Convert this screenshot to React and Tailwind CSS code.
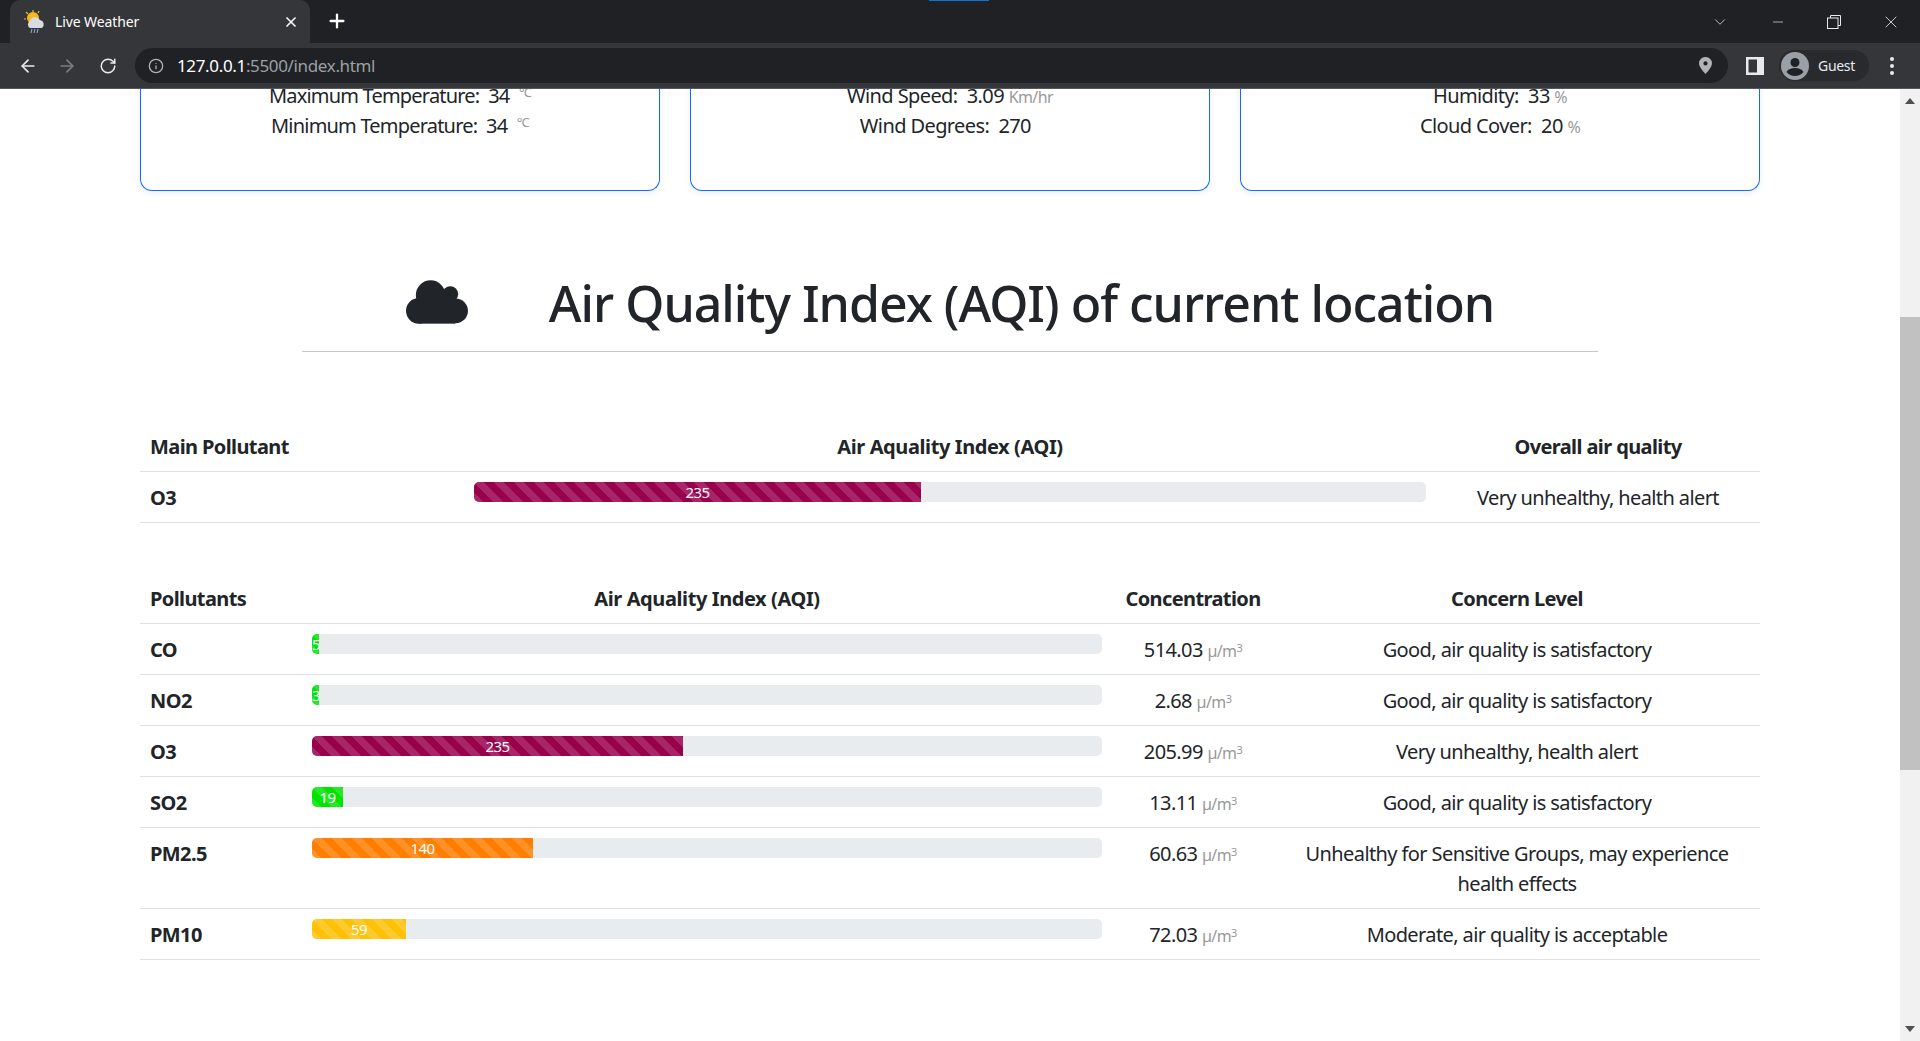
import React from 'react';
import { ArrowLeft, ArrowRight, RotateCw, X, Plus, ChevronDown, Minus, Info } from 'lucide-react';

const stripes = 'bg-[linear-gradient(45deg,rgba(255,255,255,.15)_25%,transparent_25%,transparent_50%,rgba(255,255,255,.15)_50%,rgba(255,255,255,.15)_75%,transparent_75%,transparent)] bg-[length:20px_20px]';

const cards = [
  { tracking: 'tracking-[-0.8px]', rows: [['Maximum Temperature:', '34', '°C', true], ['Minimum Temperature:', '34', '°C', true]] },
  { tracking: '', rows: [['Wind Speed:', '3.09', 'Km/hr'], ['Wind Degrees:', '270', '']] },
  { tracking: '', rows: [['Humidity:', '33', '%'], ['Cloud Cover:', '20', '%']] },
];

const pollutants = [
  { name: 'CO', aqi: 5, width: 7, color: 'bg-[#00e400]', conc: '514.03', level: 'Good, air quality is satisfactory' },
  { name: 'NO2', aqi: 3, width: 7, color: 'bg-[#00e400]', conc: '2.68', level: 'Good, air quality is satisfactory' },
  { name: 'O3', aqi: 235, width: 371, color: 'bg-[#99004c]', conc: '205.99', level: 'Very unhealthy, health alert' },
  { name: 'SO2', aqi: 19, width: 31, color: 'bg-[#00e400]', conc: '13.11', level: 'Good, air quality is satisfactory' },
  { name: 'PM2.5', aqi: 140, width: 221, color: 'bg-[#ff7e00]', conc: '60.63', level: 'Unhealthy for Sensitive Groups, may experience health effects' },
  { name: 'PM10', aqi: 59, width: 94, color: 'bg-[#ffc107]', conc: '72.03', level: 'Moderate, air quality is acceptable' },
];

function Progress({ value, width, color }) {
  return (
    <div className="h-5 rounded-[5px] bg-[#e9ecef] overflow-hidden flex">
      <div className={`h-5 overflow-hidden text-center text-[15px] leading-5 text-white ${color} ${stripes}`} style={{ width }}>
        {value}
      </div>
    </div>
  );
}

function Favicon() {
  return (
    <svg width="22" height="24" viewBox="0 0 22 24">
      <circle cx="9" cy="8" r="6" fill="#f5b821" />
      <path d="M9 0v2M2 2l2 2M0 9h2M15 1l-1 2" stroke="#f5b821" strokeWidth="1.2" />
      <path d="M6 18a4 4 0 0 1 0-7 5.500 5.500 0 0 1 10-1 4.500 4.500 0 0 1 2 8z" fill="#d9dbe0" />
      <path d="M8 19l-1 4M11 19l-1 4M14 19l-1 4" stroke="#8ab4f8" strokeWidth="1" />
    </svg>
  );
}

function BrowserBar() {
  return (
    <div className="shrink-0 h-[89px] bg-[#35363a] border-b border-[#55575b] text-[#e8eaed] font-['Noto_Sans',sans-serif]">
      <div className="relative h-[43px] bg-[#202124] flex items-end pl-[10px]">
        <div className="absolute left-[929px] top-0 w-[60px] h-px bg-[#0a74d8]" />
        <div className="w-[300px] h-[43px] bg-[#35363a] rounded-t-[10px] flex items-center pl-[14px] pr-[11px]">
          <Favicon />
          <span className="ml-[9px] flex-1 text-[14px] tracking-[-0.1px] text-white">Live Weather</span>
          <X size={16} strokeWidth={2.5} className="text-white" />
        </div>
        <Plus size={22} strokeWidth={2.5} className="ml-[16px] mb-[11px] text-white" />
        <div className="ml-auto flex items-center h-full">
          <ChevronDown size={18} strokeWidth={1} className="mr-[41px]" />
          <Minus size={16} strokeWidth={1} className="mr-[41px]" />
          <svg width="14" height="14" viewBox="0 0 14 14" fill="none" stroke="#e8eaed" strokeWidth="1" className="mr-[40px]">
            <path d="M3.500 3V.5h10v10H11" />
            <rect x=".5" y="3" width="10.500" height="10.500" />
          </svg>
          <X size={20} strokeWidth={1} className="mr-[19px]" />
        </div>
      </div>
      <div className="h-[45px] flex items-center pl-[18px]">
        <ArrowLeft size={20} strokeWidth={2} />
        <ArrowRight size={20} strokeWidth={2} className="ml-[19px] text-[#7c7e82]" />
        <RotateCw size={18} strokeWidth={2} className="ml-[22px]" />
        <div className="ml-[18px] w-[1593px] h-[35px] rounded-full bg-[#202124] flex items-center pl-[13px] pr-[16px]">
          <Info size={16} strokeWidth={2} className="text-[#b0b2b6]" />
          <span className="ml-[13px] flex-1 text-[17px] tracking-[-0.35px] text-white">127.0.0.1<span className="text-[#9aa0a6]">:5500/index.html</span></span>
          <svg width="13" height="17" viewBox="0 0 13 17">
            <path fillRule="evenodd" fill="#b0b2b6" d="M6.500 0A6.300 6.300 0 0 1 13 6.300C13 10.500 6.500 17 6.500 17S0 10.500 0 6.300A6.300 6.300 0 0 1 6.500 0zm0 4.300a2.100 2.100 0 1 0 0 4.200 2.100 2.100 0 0 0 0-4.200z" />
          </svg>
        </div>
        <svg width="18" height="18" viewBox="0 0 18 18" className="ml-[18px]">
          <path fillRule="evenodd" fill="#e8eaed" d="M0 0h18v18H0zM2.500 2.500v13H11v-13z" />
        </svg>
        <div className="ml-[15px] w-[90px] h-[31px] rounded-full bg-[#292a2d] flex items-center pl-[2px]">
          <svg width="28" height="28" viewBox="0 0 28 28">
            <circle cx="14" cy="14" r="14" fill="#9aa0a6" />
            <circle cx="14" cy="10.500" r="4.500" fill="#202124" />
            <path d="M5.500 20c1.500-3 5-4 8.500-4s7 1 8.500 4a11 11 0 0 1-17 0z" fill="#202124" />
          </svg>
          <span className="ml-[9px] text-[14px] tracking-[-0.3px]">Guest</span>
        </div>
        <div className="ml-[21px] flex flex-col gap-[3px]">
          <span className="w-1 h-1 rounded-full bg-[#e8eaed]" />
          <span className="w-1 h-1 rounded-full bg-[#e8eaed]" />
          <span className="w-1 h-1 rounded-full bg-[#e8eaed]" />
        </div>
      </div>
    </div>
  );
}

function Scrollbar() {
  return (
    <div className="shrink-0 w-5 bg-[#f1f1f1] flex flex-col items-center justify-between relative">
      <span className="mt-[9px] w-0 h-0 border-x-[5px] border-x-transparent border-b-[6px] border-b-[#505050]" />
      <div className="absolute left-0 top-[228px] w-full h-[453px] bg-[#c1c1c1]" />
      <span className="mb-[9px] w-0 h-0 border-x-[5px] border-x-transparent border-t-[6px] border-t-[#505050]" />
    </div>
  );
}

function Unit({ children, sup }) {
  if (sup) return <sup className="text-[13px] leading-none text-[#999] ml-[5px]">{children}</sup>;
  return children
    ? <span className="text-[16px] leading-none text-[#999]">{children}</span>
    : <span>&nbsp;</span>;
}

export default function App() {
  return (
    <div className="h-screen flex flex-col overflow-hidden bg-white text-[#212529] text-[20px] leading-[30px] tracking-[-0.6px] font-['Noto_Sans',sans-serif]">
      <BrowserBar />
      <div className="flex-1 flex min-h-0">
        <div className="flex-1 overflow-hidden">
          <div className="w-[1620px] mx-auto -mt-[8px]">
            <div className="grid grid-cols-3 gap-[30px]">
              {cards.map((card, i) => (
                <div key={i} className={`h-[110px] border-x border-b border-[#0d6efd] rounded-b-[12px] text-center shadow-[0_2px_6px_rgba(0,0,0,.08)] ${card.tracking}`}>
                  {card.rows.map(([label, val, unit, sup]) => (
                    <div key={label}>
                      {label}&nbsp; {val} <Unit sup={sup}>{unit}</Unit>
                    </div>
                  ))}
                </div>
              ))}
            </div>

            <div className="mt-[83px] flex justify-center items-center gap-[81px]">
              <svg width="62" height="44" viewBox="0 0 63 44" fill="#212529" className="mt-[-4px]">
                <circle cx="13" cy="31" r="13" />
                <circle cx="25" cy="15" r="15" />
                <circle cx="45" cy="14" r="8" />
                <circle cx="50.500" cy="31" r="12.500" />
                <rect x="13" y="16" width="37" height="28" />
              </svg>
              <h1 className="text-[50px] leading-[60px] font-medium tracking-[-1px] -translate-y-px">Air Quality Index (AQI) of current location</h1>
            </div>
            <hr className="w-[1296px] mx-auto mt-[17px] border-t border-[#c8c9ca]" />

            <table className="mt-[69px] w-full table-fixed border-collapse">
              <colgroup>
                <col className="w-[20%]" />
                <col className="w-[60%]" />
                <col className="w-[20%]" />
              </colgroup>
              <thead>
                <tr className="border-b border-[#dee2e6]">
                  <th className="px-[10px] pt-[11px] pb-[9px] font-bold text-left">Main Pollutant</th>
                  <th className="px-[10px] pt-[11px] pb-[9px] font-bold tracking-[-0.4px]">Air Aquality Index (AQI)</th>
                  <th className="px-[10px] pt-[11px] pb-[9px] font-bold">Overall air quality</th>
                </tr>
              </thead>
              <tbody>
                <tr className="border-b border-[#dee2e6]">
                  <td className="px-[10px] pt-[11px] pb-[9px] font-bold align-top">O3</td>
                  <td className="p-[10px] align-top"><Progress value={235} width={447} color="bg-[#99004c]" /></td>
                  <td className="px-[10px] pt-[11px] pb-[9px] align-top text-center">Very unhealthy, health alert</td>
                </tr>
              </tbody>
            </table>

            <table className="mt-[50px] w-full table-fixed border-collapse">
              <colgroup>
                <col className="w-[10%]" />
                <col className="w-[50%]" />
                <col className="w-[10%]" />
                <col className="w-[30%]" />
              </colgroup>
              <thead>
                <tr className="border-b border-[#dee2e6]">
                  <th className="px-[10px] pt-[11px] pb-[9px] font-bold text-left">Pollutants</th>
                  <th className="px-[10px] pt-[11px] pb-[9px] font-bold tracking-[-0.4px]">Air Aquality Index (AQI)</th>
                  <th className="px-[10px] pt-[11px] pb-[9px] font-bold">Concentration</th>
                  <th className="px-[10px] pt-[11px] pb-[9px] font-bold">Concern Level</th>
                </tr>
              </thead>
              <tbody>
                {pollutants.map((p) => (
                  <tr key={p.name} className="border-b border-[#dee2e6]">
                    <td className="px-[10px] pt-[11px] pb-[9px] font-bold align-top">{p.name}</td>
                    <td className="p-[10px] align-top"><Progress value={p.aqi} width={p.width} color={p.color} /></td>
                    <td className="px-[10px] pt-[11px] pb-[9px] align-top text-center whitespace-nowrap">
                      {p.conc} <span className="text-[16px] leading-none text-[#999]">µ/m<sup className="text-[11px] leading-none">3</sup></span>
                    </td>
                    <td className="px-[10px] pt-[11px] pb-[9px] align-top text-center">{p.level}</td>
                  </tr>
                ))}
              </tbody>
            </table>
          </div>
        </div>
        <Scrollbar />
      </div>
    </div>
  );
}
